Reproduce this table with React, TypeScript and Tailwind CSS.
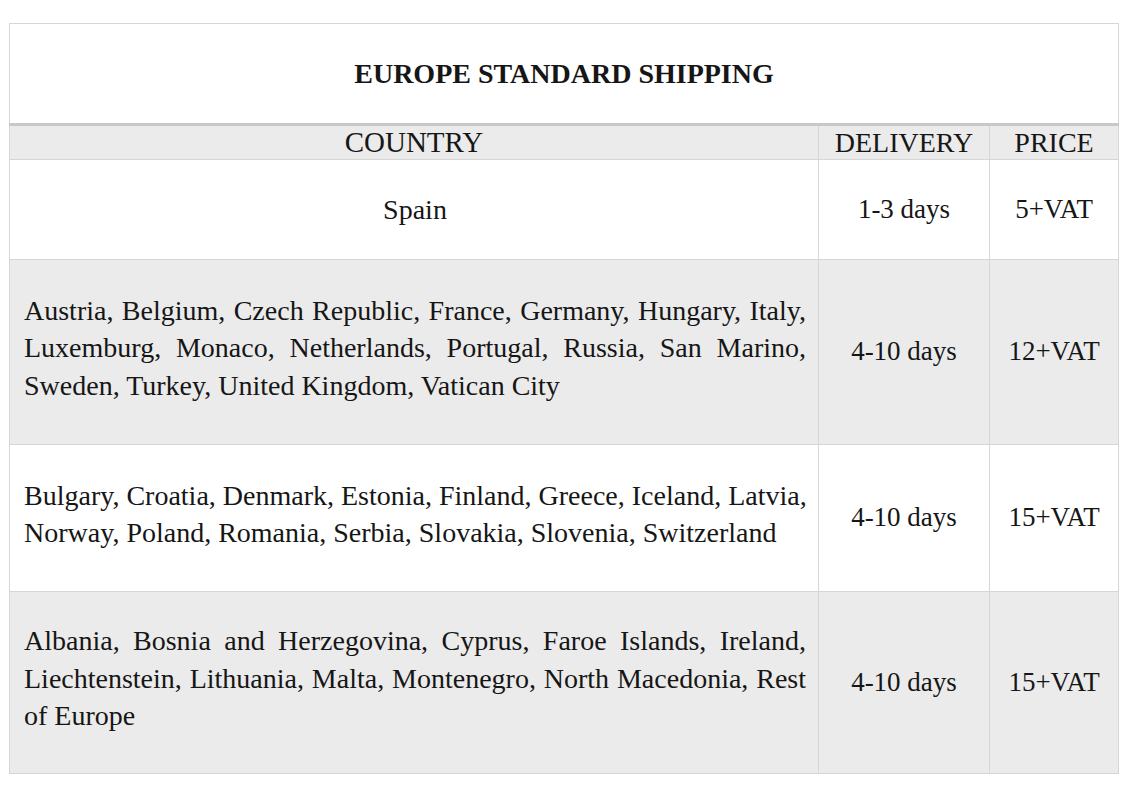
const rows = [
    {
        lines: ['Spain'],
        centered: true,
        delivery: '1-3 days',
        price: '5+VAT',
        height: 'h-[100px]',
        shade: 'bg-white',
    },
    {
        lines: [
            'Austria, Belgium, Czech Republic, France, Germany, Hungary, Italy,',
            'Luxemburg, Monaco, Netherlands, Portugal, Russia, San Marino,',
            'Sweden, Turkey, United Kingdom, Vatican City',
        ],
        delivery: '4-10 days',
        price: '12+VAT',
        height: 'h-[185px]',
        shade: 'bg-[#ebebeb]',
    },
    {
        lines: [
            'Bulgary, Croatia, Denmark, Estonia, Finland, Greece, Iceland, Latvia,',
            'Norway, Poland, Romania, Serbia, Slovakia, Slovenia, Switzerland',
        ],
        delivery: '4-10 days',
        price: '15+VAT',
        height: 'h-[147px]',
        shade: 'bg-white',
    },
    {
        lines: [
            'Albania, Bosnia and Herzegovina, Cyprus, Faroe Islands, Ireland,',
            'Liechtenstein, Lithuania, Malta, Montenegro, North Macedonia, Rest',
            'of Europe',
        ],
        delivery: '4-10 days',
        price: '15+VAT',
        height: 'h-[182px]',
        shade: 'bg-[#ebebeb]',
    },
];

export default function App() {
    return (
        <div className="min-h-[800px] w-[1138px] bg-white pt-[23px] pl-[9px] font-['Liberation_Serif',serif] text-[#161616]">
            <table className="w-[1109px] table-fixed border-collapse">
                <colgroup>
                    <col className="w-[809px]" />
                    <col className="w-[171px]" />
                    <col className="w-[129px]" />
                </colgroup>
                <tbody>
                    {/* Title */}
                    <tr className="h-[101px]">
                        <td colSpan={3} className="border border-b-[3px] border-[#d6d6d6] border-b-[#c8c8c8] text-center align-middle text-[28px] font-bold leading-none">
                            EUROPE STANDARD SHIPPING
                        </td>
                    </tr>

                    {/* Header */}
                    <tr className="h-[35px] bg-[#ebebeb] text-[28px] leading-none">
                        <td className="border border-[#d6d6d6] text-center text-[29px]">COUNTRY</td>
                        <td className="border border-[#d6d6d6] text-center">DELIVERY</td>
                        <td className="border border-[#d6d6d6] text-center">PRICE</td>
                    </tr>

                    {rows.map((row, i) => (
                        <tr key={i} className={`${row.height} ${row.shade} text-[27px] leading-[37.5px]`}>
                            <td className={`border border-[#d6d6d6] pr-[12px] pl-[14px] align-middle text-[28px] ${row.centered ? '' : 'pb-[8px]'}`}>
                                {row.centered ? (
                                    <div className="text-center">{row.lines[0]}</div>
                                ) : (
                                    row.lines.map((line, j) =>
                                        j < row.lines.length - 1 ? (
                                            <div key={j} className="whitespace-nowrap text-justify [text-align-last:justify]">
                                                {line}
                                            </div>
                                        ) : (
                                            <div key={j}>{line}</div>
                                        ),
                                    )
                                )}
                            </td>
                            <td className="border border-[#d6d6d6] text-center align-middle">{row.delivery}</td>
                            <td className="border border-[#d6d6d6] text-center align-middle">{row.price}</td>
                        </tr>
                    ))}
                </tbody>
            </table>
        </div>
    );
}
